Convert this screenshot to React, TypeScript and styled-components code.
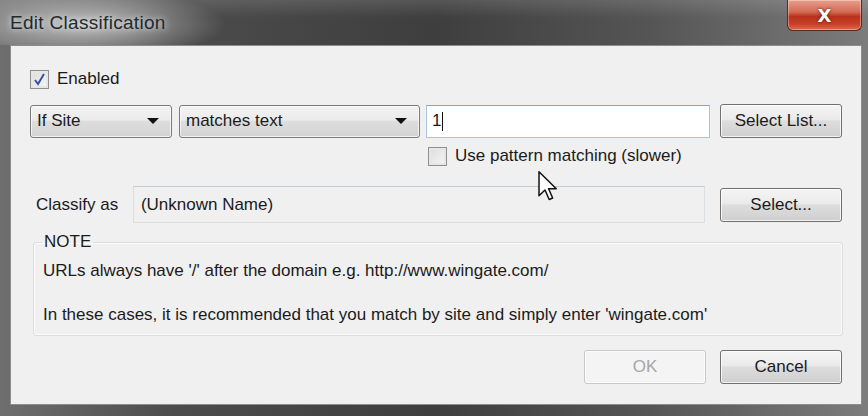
import React from "react";
import styled, { createGlobalStyle } from "styled-components";

const Global = createGlobalStyle`
  html, body { margin: 0; padding: 0; background: #3e3e3e; }
  body { font-family: "Liberation Sans", Arial, sans-serif; }
  * { box-sizing: border-box; }
`;

const Window = styled.div`
  position: relative;
  width: 868px;
  height: 416px;
  display: flex;
  flex-direction: column;
  background: linear-gradient(90deg, #6e6e6e 0%, #4c4c4c 20%, #3e3e3e 50%, #555 75%, #7c7c7c 100%);
  overflow: hidden;
`;

const TitleBar = styled.div`
  height: 45px;
  flex: none;
  display: flex;
  align-items: flex-start;
  padding-left: 10px;
  background:
    radial-gradient(ellipse 140px 36px at 85px 24px, rgba(225,225,225,0.75), rgba(200,200,200,0) 100%),
    linear-gradient(180deg, rgba(255,255,255,0.12), rgba(0,0,0,0) 40%);
`;

const Title = styled.div`
  margin-top: 12px;
  font-size: 19px;
  letter-spacing: 0.3px;
  color: #1f2a30;
  text-shadow: 0 0 6px rgba(255,255,255,0.9);
`;

const CloseButton = styled.div`
  margin-left: auto;
  margin-right: 6px;
  width: 75px;
  height: 31px;
  border: 1px solid #5a2a22;
  border-top: none;
  border-radius: 0 0 6px 6px;
  background: linear-gradient(180deg, #e8a08e 0%, #d46a52 40%, #b8321c 55%, #c8402a 80%, #e06a4a 100%);
  box-shadow: inset 0 0 0 1px rgba(255,255,255,0.35);
  display: flex;
  align-items: center;
  justify-content: center;
  color: #fff;
  font-family: "DejaVu Sans", sans-serif;
  font-weight: bold;
  font-size: 18px;
  text-shadow: 0 0 3px #4a1208;
`;

const Client = styled.div`
  flex: 1;
  margin: 0 6px 11px 10px;
  background: #f0f0f0;
  border: 1px solid #8c8c8c;
  display: flex;
  flex-direction: column;
  padding: 23px 19px 0 19px;
  color: #1b1b1b;
  font-size: 17px;
`;

const CheckRow = styled.label<{ $indent?: number }>`
  display: flex;
  align-items: center;
  gap: 8px;
  height: 20px;
  margin-left: ${(p) => p.$indent ?? 0}px;
`;

const CheckBox = styled.span`
  width: 19px;
  height: 19px;
  border: 1px solid #8e8f8f;
  background: linear-gradient(135deg, #dcdcdc, #f6f6f6);
  box-shadow: inset 0 0 0 2px #e6e6e6;
  display: flex;
  align-items: center;
  justify-content: center;
`;

const Row = styled.div<{ $mt: number }>`
  display: flex;
  align-items: center;
  margin-top: ${(p) => p.$mt}px;
`;

const Combo = styled.div<{ $w: number; $ml?: number }>`
  width: ${(p) => p.$w}px;
  height: 33px;
  margin-left: ${(p) => p.$ml ?? 0}px;
  border: 1px solid #7a7a7a;
  border-radius: 3px;
  background: linear-gradient(180deg, #f3f3f3 0%, #ebebeb 45%, #dddddd 50%, #d3d3d3 100%);
  box-shadow: inset 0 0 0 1px rgba(255,255,255,0.7);
  display: flex;
  align-items: center;
  padding: 0 12px 0 6px;
  justify-content: space-between;
`;

const Arrow = styled.span`
  width: 0;
  height: 0;
  border-left: 6px solid transparent;
  border-right: 6px solid transparent;
  border-top: 6px solid #111;
`;

const TextInput = styled.div`
  width: 284px;
  height: 33px;
  margin-left: 6px;
  background: #fff;
  border: 1px solid #a9c4dd;
  border-top-color: #7fa6c9;
  display: flex;
  align-items: center;
  padding-left: 5px;
`;

const Caret = styled.span`
  display: inline-block;
  width: 1px;
  height: 19px;
  background: #111;
  margin-left: 1px;
`;

const Button = styled.div<{ $disabled?: boolean; $ml?: number }>`
  width: 122px;
  height: 34px;
  margin-left: ${(p) => p.$ml ?? 0}px;
  border: 1px solid ${(p) => (p.$disabled ? "#c6c9cc" : "#707070")};
  border-radius: 3px;
  background: ${(p) =>
    p.$disabled
      ? "#f4f4f4"
      : "linear-gradient(180deg, #f4f4f4 0%, #ebebeb 45%, #dddddd 50%, #cfcfcf 100%)"};
  box-shadow: inset 0 0 0 1px rgba(255,255,255,0.75);
  color: ${(p) => (p.$disabled ? "#a6a6a6" : "#1b1b1b")};
  display: flex;
  align-items: center;
  justify-content: center;
`;

const Label = styled.div`
  width: 103px;
  padding-left: 6px;
`;

const ReadOnlyField = styled.div`
  width: 573px;
  height: 37px;
  border: 1px solid #dadfe4;
  border-top-color: #c4ccd4;
  background: #f0f0f0;
  display: flex;
  align-items: center;
  padding-left: 7px;
  margin-right: 15px;
`;

const Group = styled.fieldset`
  margin: 9px -1px 0 3px;
  height: 104px;
  border: 1px solid #dcdcdc;
  border-radius: 3px;
  box-shadow: inset 0 0 0 1px #fbfbfb;
  padding: 0 10px 0 9px;
  display: flex;
  flex-direction: column;
`;

const Legend = styled.legend`
  padding: 0 2px;
  margin-left: -1px;
`;

const NoteLine = styled.div<{ $mt: number }>`
  margin-top: ${(p) => p.$mt}px;
  line-height: 20px;
`;

const Footer = styled.div`
  display: flex;
  justify-content: flex-end;
  margin-top: 14px;
`;

const Cursor = styled.svg`
  position: absolute;
  left: 538px;
  top: 171px;
`;

export default function App() {
  return (
    <>
      <Global />
      <Window>
        <TitleBar>
          <Title>Edit Classification</Title>
          <CloseButton>X</CloseButton>
        </TitleBar>
        <Client>
          <CheckRow>
            <CheckBox>
              <svg width="13" height="13" viewBox="0 0 13 13">
                <path d="M2 7 L5 11 L11 1" fill="none" stroke="#3b4fa0" strokeWidth="2" />
              </svg>
            </CheckBox>
            Enabled
          </CheckRow>
          <Row $mt={15}>
            <Combo $w={142}>
              If Site
              <Arrow />
            </Combo>
            <Combo $w={241} $ml={7}>
              matches text
              <Arrow />
            </Combo>
            <TextInput>
              1<Caret />
            </TextInput>
            <Button $ml={10}>Select List...</Button>
          </Row>
          <Row $mt={8}>
            <CheckRow $indent={398}>
              <CheckBox />
              Use pattern matching (slower)
            </CheckRow>
          </Row>
          <Row $mt={20}>
            <Label>Classify as</Label>
            <ReadOnlyField>(Unknown Name)</ReadOnlyField>
            <Button>Select...</Button>
          </Row>
          <Group>
            <Legend>NOTE</Legend>
            <NoteLine $mt={9}>URLs always have '/' after the domain e.g. http://www.wingate.com/</NoteLine>
            <NoteLine $mt={24}>
              In these cases, it is recommended that you match by site and simply enter 'wingate.com'
            </NoteLine>
          </Group>
          <Footer>
            <Button $disabled>OK</Button>
            <Button $ml={14}>Cancel</Button>
          </Footer>
        </Client>
        <Cursor width="20" height="30" viewBox="0 0 13 20">
          <path d="M0.5 0.5 L0.5 16.5 L4.5 12.7 L7.3 19 L9.6 18 L6.9 11.8 L12 11.8 Z" fill="#fff" stroke="#111" strokeWidth="1" strokeLinejoin="round" />
        </Cursor>
      </Window>
    </>
  );
}
